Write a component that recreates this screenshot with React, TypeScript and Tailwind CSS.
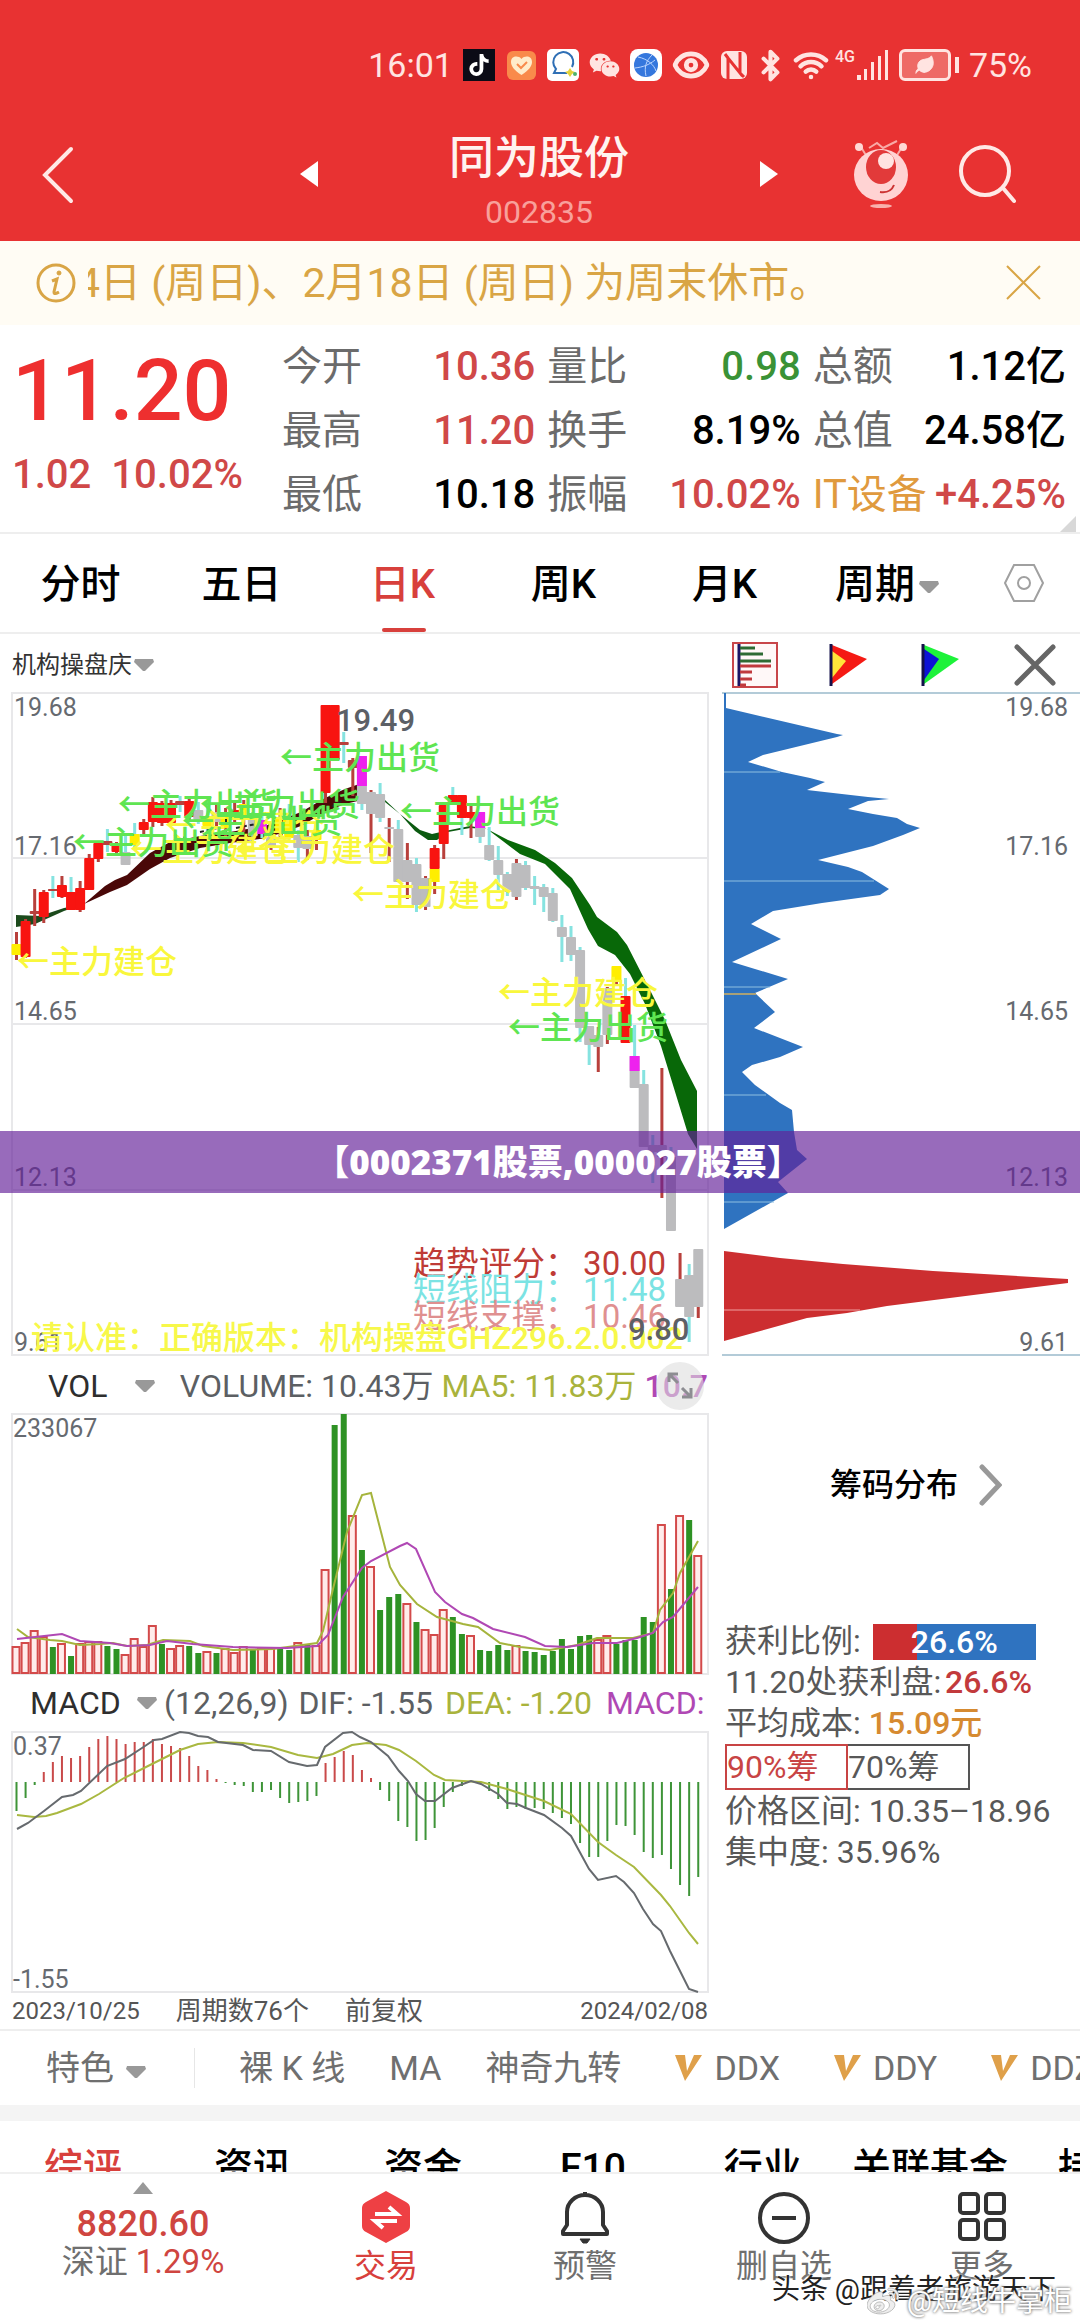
import React from "react";
import { FaTiktok, FaWeixin, FaWeibo } from "react-icons/fa6";
import { Bluetooth, Wifi, Leaf, Eye } from "lucide-react";

const STEP = 9.09;
const barX = (i: number) => 16.5 + i * STEP;

const RED = "#f81410";
const GRAY = "#bcbcbe";
const CYAN = "#86e3e0";
const WICK = "#b8403c";
const MAGENTA = "#ee22ee";
const YELLOW = "#ffee00";

// index, body top, body bottom, wick top, wick bottom, body colour, wick colour
type Candle = [number, number, number, number, number, string, string];
const candles: Candle[] = [
  [0, 252, 263, 240, 268, YELLOW, WICK],
  [1, 229, 265, 227, 266, RED, WICK],
  [2, 219, 222, 197, 234, WICK, WICK],
  [3, 200, 225, 198, 231, RED, WICK],
  [4, 197, 199, 184, 206, WICK, CYAN],
  [5, 193, 205, 184, 206, RED, WICK],
  [6, 200, 218, 185, 200, RED, CYAN],
  [7, 196, 218, 189, 220, RED, WICK],
  [8, 166, 198, 162, 198, RED, WICK],
  [9, 151, 167, 149, 170, RED, WICK],
  [10, 149, 153, 137, 160, WICK, CYAN],
  [11, 152, 160, 150, 162, RED, WICK],
  [12, 160, 173, 142, 173, GRAY, CYAN],
  [13, 142, 153, 131, 155, YELLOW, CYAN],
  [14, 130, 138, 127, 144, RED, WICK],
  [15, 110, 130, 105, 135, RED, WICK],
  [16, 111, 131, 109, 134, RED, WICK],
  [17, 111, 131, 108, 132, RED, WICK],
  [18, 109, 113, 104, 120, WICK, CYAN],
  [19, 109, 125, 107, 128, RED, WICK],
  [20, 118, 128, 110, 132, GRAY, CYAN],
  [21, 124, 134, 112, 140, YELLOW, CYAN],
  [22, 120, 130, 112, 134, GRAY, WICK],
  [23, 122, 136, 116, 144, YELLOW, WICK],
  [24, 118, 126, 110, 130, RED, WICK],
  [25, 112, 124, 108, 140, YELLOW, WICK],
  [26, 126, 144, 120, 150, GRAY, CYAN],
  [27, 128, 142, 122, 146, MAGENTA, CYAN],
  [28, 143, 155, 135, 158, GRAY, WICK],
  [29, 126, 140, 116, 146, YELLOW, WICK],
  [30, 128, 146, 112, 150, YELLOW, CYAN],
  [31, 143, 156, 138, 170, GRAY, CYAN],
  [32, 144, 157, 138, 168, GRAY, WICK],
  [33, 138, 148, 130, 158, YELLOW, WICK],
  [34, 13, 101, 13, 111, RED, WICK],
  [35, 13, 68, 13, 68, RED, WICK],
  [36, 50, 53, 40, 71, WICK, CYAN],
  [37, 68, 76, 66, 104, WICK, WICK],
  [38, 64, 112, 64, 118, GRAY, CYAN],
  [39, 100, 122, 98, 161, GRAY, WICK],
  [40, 102, 126, 91, 130, GRAY, CYAN],
  [41, 135, 137, 126, 170, GRAY, WICK],
  [42, 137, 190, 128, 190, GRAY, CYAN],
  [43, 168, 190, 151, 207, GRAY, WICK],
  [44, 172, 213, 166, 220, GRAY, CYAN],
  [45, 186, 215, 184, 218, GRAY, WICK],
  [46, 156, 177, 153, 202, RED, WICK],
  [47, 113, 152, 111, 167, RED, WICK],
  [48, 103, 113, 95, 113, RED, CYAN],
  [49, 103, 126, 103, 143, RED, CYAN],
  [50, 120, 126, 111, 146, RED, WICK],
  [51, 120, 145, 120, 151, GRAY, CYAN],
  [52, 153, 168, 135, 169, GRAY, CYAN],
  [53, 168, 183, 154, 198, GRAY, CYAN],
  [54, 182, 200, 180, 204, GRAY, CYAN],
  [55, 171, 205, 167, 208, GRAY, WICK],
  [56, 173, 196, 169, 198, GRAY, CYAN],
  [57, 194, 197, 184, 213, GRAY, CYAN],
  [58, 195, 205, 192, 220, GRAY, CYAN],
  [59, 201, 229, 196, 230, GRAY, CYAN],
  [60, 235, 245, 223, 270, GRAY, CYAN],
  [61, 245, 263, 234, 269, GRAY, CYAN],
  [62, 258, 336, 255, 350, GRAY, CYAN],
  [63, 334, 353, 334, 373, GRAY, CYAN],
  [64, 343, 355, 335, 380, GRAY, WICK],
  [65, 296, 343, 295, 352, GRAY, WICK],
  [66, 274, 290, 274, 294, YELLOW, WICK],
  [67, 304, 351, 286, 351, RED, CYAN],
  [68, 364, 396, 333, 396, GRAY, CYAN],
  [69, 392, 455, 378, 455, GRAY, CYAN],
  [70, 453, 460, 443, 491, GRAY, CYAN],
  [71, 453, 465, 376, 506, GRAY, WICK],
  [72, 465, 539, 455, 539, GRAY, CYAN],
  [73, 587, 615, 561, 615, GRAY, WICK],
  [74, 583, 625, 572, 650, GRAY, CYAN],
  [75, 557, 615, 557, 626, GRAY, WICK],
];

// blocks painted over a candle body: index, top, bottom, colour
const marks: [number, number, number, string][] = [
  [38, 64, 94, MAGENTA],
  [46, 177, 190, YELLOW],
  [51, 120, 136, MAGENTA],
  [68, 364, 379, MAGENTA],
];

const SELL = "←主力出货";
const BUY = "←主力建仓";
const signals: [number, number, string][] = [
  [17, 270, BUY],
  [130, 158, BUY],
  [165, 134, BUY],
  [235, 158, BUY],
  [352, 203, BUY],
  [498, 301, BUY],
  [280, 66, SELL],
  [118, 113, SELL],
  [200, 113, SELL],
  [182, 130, SELL],
  [73, 151, SELL],
  [400, 120, SELL],
  [508, 336, SELL],
];

const volumes = [
  26, 30, 42, 36, -27, 29, -18, 29, 31, 31, -28, -25, 18, 34, 26, 47, -30, 24, 27, -28, -21, 21, -21, 24, 20, 26,
  -24, 24, 24, -26, -24, 30, -30, 27, 103, -249, -260, 157, -124, 106, -64, -77, -80, 69, -52, 43, 38, 63, -57,
  -40, 37, -24, -23, -29, -24, 27, -23, -22, -19, -23, -35, -25, -38, -39, 33, 37, -30, -34, -34, -57, -52, 148,
  -85, 157, -154, 117,
];

const macd = [
  -29, -16, -3, 10, 20, 26, 24, 26, 35, 43, 46, 43, 38, 40, 40, 43, 38, 36, 34, 26, 16, 12, 3, -1, -3, -4, -10, -10,
  -8, -16, -21, -20, -19, -14, 19, 25, 31, 27, 12, 4, -8, -19, -39, -45, -59, -58, -46, -25, -10, -4, 0, -2, -9, -17,
  -27, -25, -27, -26, -27, -31, -36, -42, -61, -75, -75, -59, -43, -44, -53, -70, -76, -73, -87, -103, -114, -95,
];

const priceLabels: [string, number][] = [
  ["19.68", 24],
  ["17.16", 163],
  ["14.65", 328],
  ["12.13", 494],
  ["9.61", 659],
];

function Caret({ className = "" }: { className?: string }) {
  return (
    <svg className={`h-3 w-5 shrink-0 ${className}`} viewBox="0 0 20 12" fill="#999">
      <path d="M1 0h18l1 3-9 9h-2L0 3z" />
    </svg>
  );
}

function StatusBar() {
  return (
    <div className="flex h-8 items-center justify-end gap-[10px] pr-12 text-[34px] leading-8 text-[#ffe4e1]">
      <span>16:01</span>
      <span className="flex h-8 w-8 items-center justify-center bg-[#0b0b16] text-white">
        <FaTiktok size={22} />
      </span>
      <svg className="h-8 w-8" viewBox="0 0 32 32">
        <rect x="2" y="2" width="29" height="29" rx="6" fill="#f98a4b" />
        <path d="M16.500 26C9 21 6 17 6 13c0-6 7-7 10.500-3C20 6 27 7 27 13c0 4-3 8-10.500 13z" fill="#ffeccb" />
        <path d="M12 15l4 4 6-6" fill="none" stroke="#f98a4b" strokeWidth="2" />
      </svg>
      <svg className="h-8 w-8" viewBox="0 0 32 32">
        <rect width="32" height="32" rx="5" fill="#fff" />
        <path d="M20 24H7l2-4a10 10 0 1 1 16-2" fill="none" stroke="#2f6fb5" strokeWidth="2" />
        <path d="M23 19l2 3 3 1-3 2-2 3-2-3-3-2 3-1z" fill="#e4d23a" />
        <circle cx="28" cy="25" r="2" fill="#4fb26b" />
      </svg>
      <FaWeixin size={31} />
      <svg className="h-8 w-8" viewBox="0 0 32 32">
        <rect width="32" height="32" rx="8" fill="#fff" />
        <circle cx="16" cy="16" r="12" fill="#3577dd" />
        <path d="M8 8c10 2 16 8 18 14M22 6c-6 6-8 12-6 21M5 19c8-1 14-3 20-8" fill="none" stroke="#bcd6ff" strokeWidth="1" />
      </svg>
      <Eye size={38} strokeWidth={3} />
      <svg className="h-8 w-7" viewBox="0 0 28 32" fill="none">
        <rect x="1" y="2" width="26" height="28" rx="6" fill="#ffe4e1" />
        <path d="M8 30V9l12 15V3M8 9L5 5M20 24l4 4" stroke="#e83232" strokeWidth="3" />
      </svg>
      <Bluetooth className="-mx-1" size={33} strokeWidth={3} />
      <Wifi size={36} strokeWidth={3} />
      <span className="-ml-1 self-start text-[16px] leading-4 font-medium">4G</span>
      <svg className="-ml-2 h-8 w-8" viewBox="0 0 32 32" fill="#ffe4e1">
        <path d="M0 26h4v5H0zM7 20h3v11H7zM14 13h3v18h-3zM21 7h3v24h-3zM28 1h3v30h-3z" />
      </svg>
      <span className="flex items-center gap-1">
        <span className="flex h-8 w-13 items-center justify-center rounded-md border-3 border-[#ffe4e1] bg-[#ee6a66]">
          <Leaf size={22} fill="#ffe4e1" strokeWidth={1} />
        </span>
        <span className="h-4 w-1 bg-[#ffe4e1]" />
      </span>
      <span>75%</span>
    </div>
  );
}

function TitleBar() {
  return (
    <div className="flex items-center justify-between pt-8 pr-16 pl-10">
      <button type="button" aria-label="返回" className="w-[259px]">
        <svg className="h-[60px] w-9" viewBox="0 0 36 60" fill="none" stroke="#ffe9e6" strokeWidth="4" strokeLinecap="round">
          <path d="M31 5L5 31l26 26" />
        </svg>
      </button>
      <button type="button" aria-label="上一只">
        <svg className="h-7 w-5" viewBox="0 0 20 28" fill="#fff"><path d="M19 1v26L1 14z" /></svg>
      </button>
      <div className="flex flex-1 flex-col items-center pt-4">
        <h1 className="text-[45px] leading-[60px] font-medium text-[#fff3f0]">同为股份</h1>
        <span className="text-[32px] leading-[46px] text-[#f8a09b]">002835</span>
      </div>
      <button type="button" aria-label="下一只" className="mr-[73px]">
        <svg className="h-7 w-5" viewBox="0 0 20 28" fill="#fff"><path d="M1 1v26l18-13z" /></svg>
      </button>
      <div className="flex items-center gap-12">
        <button type="button" aria-label="助手">
          <svg className="h-[70px] w-[58px]" viewBox="0 0 58 70">
            <path d="M9 8l6 10M50 8l-6 10M17 9l8-5 6 5 14-7" fill="none" stroke="#f9aaa6" strokeWidth="2" />
            <circle cx="7" cy="8" r="4" fill="#ffd9d6" />
            <circle cx="51" cy="8" r="4" fill="#ffd9d6" />
            <ellipse cx="29" cy="36" rx="27" ry="26" fill="#ffd3d3" />
            <ellipse cx="29" cy="28" rx="15" ry="17" fill="#e23a3a" />
            <circle cx="34" cy="22" r="8" fill="#ffe4e1" />
            <path d="M28 53c7 1 12-2 14-7" fill="none" stroke="#c33" strokeWidth="2" />
            <ellipse cx="29" cy="67" rx="11" ry="2" fill="#f9b0ac" />
          </svg>
        </button>
        <button type="button" aria-label="搜索">
          <svg className="h-[60px] w-[58px]" viewBox="0 0 58 60" fill="none" stroke="#ffe9e6" strokeWidth="4" strokeLinecap="round">
            <circle cx="27" cy="27" r="24" />
            <path d="M45 44l11 13" />
          </svg>
        </button>
      </div>
    </div>
  );
}

function Notice() {
  return (
    <div className="flex h-[84px] items-center bg-[#fffcf4] pr-9 pl-9 text-[#d9a545]">
      <svg className="h-10 w-10 shrink-0" viewBox="0 0 40 40" fill="none" stroke="currentColor">
        <circle cx="20" cy="20" r="18" strokeWidth="3" />
        <circle cx="23" cy="10" r="2" fill="currentColor" />
        <path d="M16 18l5-2-3 13c0 3 3 1 5 0" strokeWidth="3" />
      </svg>
      <p className="ml-3 flex flex-1 justify-start overflow-hidden text-[41px] leading-[50px] whitespace-pre">
        <span className="flex w-3 shrink-0 justify-end overflow-hidden">4</span>
        <span>日 (周日)、2月18日 (周日) 为周末休市。</span>
      </p>
      <button type="button" aria-label="关闭">
        <svg className="h-10 w-10" viewBox="0 0 40 40" fill="none" stroke="currentColor" strokeWidth="2">
          <path d="M3 3l33 33M36 3L3 36" />
        </svg>
      </button>
    </div>
  );
}

const quoteColumns = [
  [
    ["今开", "10.36", "text-[#d04848]"],
    ["最高", "11.20", "text-[#d04848]"],
    ["最低", "10.18", "text-black"],
  ],
  [
    ["量比", "0.98", "text-[#3a9236]"],
    ["换手", "8.19%", "text-black"],
    ["振幅", "10.02%", "text-[#d04848]"],
  ],
  [
    ["总额", "1.12亿", "text-black"],
    ["总值", "24.58亿", "text-black"],
    ["IT设备", "+4.25%", "text-[#d04848]"],
  ],
];

function Quote() {
  return (
    <section className="relative flex h-[209px] border-b-2 border-[#eee] pr-[14px]">
      <div className="w-[282px] pt-5 pl-3">
        <div className="text-[86px] leading-[92px] font-medium text-[#ee2f2f]">11.20</div>
        <div className="mt-4 flex gap-5 text-[40px] leading-[44px] font-medium text-[#d04848]">
          <span>1.02</span>
          <span>10.02%</span>
        </div>
      </div>
      <div className="grid flex-1 grid-cols-3 gap-x-3 pt-[10px] text-[40px] leading-16">
        {quoteColumns.map((rows, c) => (
          <dl key={c}>
            {rows.map(([label, value, color]) => (
              <div key={label} className="flex justify-between whitespace-nowrap">
                <dt className={label === "IT设备" ? "text-[#e09a3e]" : "text-[#6b6b6b]"}>{label}</dt>
                <dd className={`font-medium ${color}`}>{value}</dd>
              </div>
            ))}
          </dl>
        ))}
      </div>
      <svg className="absolute right-1 bottom-0 h-4 w-4" viewBox="0 0 16 16" fill="#d8d8d8"><path d="M16 0v16H0z" /></svg>
    </section>
  );
}

function PeriodTabs() {
  const tabs = ["分时", "五日", "日K", "周K", "月K"];
  return (
    <nav className="flex h-[100px] items-stretch border-b-2 border-[#eee] pr-9 text-[40px]">
      {tabs.map((tab) => (
        <button
          key={tab}
          type="button"
          className={`relative w-[161px] pt-1 font-medium ${tab === "日K" ? "text-[#d8403c]" : "text-black"}`}
        >
          {tab}
          {tab === "日K" && <span className="absolute bottom-0 left-15 h-1 w-11 rounded bg-[#d8403c]" />}
        </button>
      ))}
      <button type="button" className="ml-[30px] flex items-center gap-1 pt-1 font-medium">
        周期
        <Caret className="mt-1" />
      </button>
      <button type="button" aria-label="设置" className="ml-auto">
        <svg className="h-10 w-10" viewBox="0 0 40 40" fill="none" stroke="#a0a0a0" strokeWidth="2">
          <path d="M10 2h20l9 18-9 18H10L1 20z" />
          <circle cx="20" cy="20" r="6" />
        </svg>
      </button>
    </nav>
  );
}

function KLineChart() {
  return (
    <svg className="block w-full" viewBox="0 0 720 664">
      <g stroke="#e8e8ea" strokeWidth="2" fill="none">
        <rect x="12" y="1" width="696" height="662" />
        <path d="M12 166h696M12 332h696M12 498h696" />
      </g>
      <g fill="#666a70" fontSize="25">
        {priceLabels.map(([label, y]) => (
          <text key={label} x="14" y={y}>{label}</text>
        ))}
      </g>

      {/* trend ribbon */}
      <path d="M16 223l24 1 24-8 20-4-20 7-29 13-19 3z" fill="#1c4a1c" />
      <path
        d="M84 212L105 194 115 188 127 183 150 161 170 150 200 144 230 140 265 134 301 120 325 106 345 97 362 91V108L345 112 325 120 301 134 267 146 230 151 200 156 170 166 150 177 127 193 110 200z"
        fill="#4a0808"
      />
      <path d="M362 99l23 9 15 14 20 16 12 4 13-3 25-5 17 3-17-1-22 4-11 8h-9l-13-9-15-17-15-12z" fill="#0b5a10" />
      <path
        d="M487 137l21 11 27 10 20 13 17 15 18 27 7 12 20 15 10 13 23 45 15 30 16 40 16 31v58l-9-15-27-88-16-42-15-30-15-19-17-9-10-17-18-40-25-25-25-10z"
        fill="#086808"
      />

      {candles.map(([i, top, bottom, high, low, fill, wick]) => (
        <g key={i}>
          <rect x={barX(i) - 1.5} y={high} width="3" height={low - high} fill={wick} />
          <rect x={barX(i) - 5} y={top} width="10" height={bottom - top} rx="1" fill={fill} />
        </g>
      ))}
      {marks.map(([i, top, bottom, fill]) => (
        <rect key={i} x={barX(i) - 5} y={top} width="10" height={bottom - top} fill={fill} />
      ))}
      <path d="M170 150l16-5M200 140l22-5M236 136l20-4M226 120v12M274 128v16M282 128v16M326 118l20-12" stroke="#222" strokeWidth="2" strokeDasharray="4 3" />

      <g fontSize="32" fontWeight="500">
        {signals.map(([x, y, text], n) => (
          <text key={n} x={x} y={y + 11} fill={text === SELL ? "#5fe552" : "#f9f73c"}>{text}</text>
        ))}
      </g>
      <text x="336" y="39" fontSize="31" fontWeight="500" fill="#5c6066">19.49</text>

      <g fontSize="33">
        <text x="413" y="583" fill="#bf3b36">趋势评分：</text>
        <text x="666" y="583" textAnchor="end" fill="#bf3b36">30.00</text>
        <text x="413" y="609" fill="#7be3e3">短线阻力：</text>
        <text x="666" y="609" textAnchor="end" fill="#7be3e3">11.48</text>
        <text x="413" y="636" fill="#df9090">短线支撑：</text>
        <text x="666" y="636" textAnchor="end" fill="#df9090">10.46</text>
      </g>
      <text x="31" y="657" fontSize="32" fontWeight="500" fill="#f7f84a">请认准：正确版本：机构操盘GHZ296.2.0.002</text>
      <text x="628" y="648" fontSize="31" fontWeight="500" fill="#5c6066">9.80</text>
    </svg>
  );
}

function VolumeChart() {
  return (
    <svg className="block w-full" viewBox="0 0 720 262">
      <rect x="12" y="1" width="696" height="260" fill="none" stroke="#e8e8ea" strokeWidth="2" />
      <text x="13" y="24" fontSize="25" fill="#666a70">233067</text>
      {volumes.map((v, i) =>
        v > 0 ? (
          <rect key={i} x={barX(i) - 4} y={260 - v} width="7" height={v} fill="#ffeceb" stroke="#d34a4a" strokeWidth="2" />
        ) : (
          <rect key={i} x={barX(i) - 3} y={261 + v} width="6" height={-v} fill="#2e9224" />
        ),
      )}
      <polyline
        points="17,216 28,224 50,227 62,228 80,232 100,231 113,230 127,233 147,232 163,227 190,228 203,233 233,237 273,236 317,230 323,218 333,176 347,119 362,82 371,80 390,154 400,172 417,191 437,204 463,211 478,214 500,230 520,234 550,237 577,232 597,225 633,225 653,220 660,197 673,180 680,160 698,128"
        fill="none"
        stroke="#a5b43c"
        strokeWidth="2"
      />
      <polyline
        points="17,226 62,221 80,228 110,230 127,233 150,232 167,228 193,231 233,234 287,235 317,233 328,222 343,184 362,155 371,148 400,133 407,130 416,136 435,179 445,189 462,201 473,205 493,216 525,224 545,233 567,234 593,230 617,230 637,225 653,220 663,209 673,204 698,174"
        fill="none"
        stroke="#b048b4"
        strokeWidth="2"
      />
    </svg>
  );
}

function MacdChart() {
  return (
    <svg className="block w-full" viewBox="0 0 720 264">
      <rect x="12" y="3" width="696" height="260" fill="none" stroke="#e8e8ea" strokeWidth="2" />
      <g fontSize="25" fill="#666a70">
        <text x="13" y="26">0.37</text>
        <text x="13" y="259">-1.55</text>
      </g>
      {macd.map((v, i) => (
        <rect
          key={i}
          x={barX(i) - 1}
          y={v > 0 ? 53 - v : 53}
          width="2"
          height={Math.abs(v)}
          fill={v > 0 ? "#c94a4a" : "#3e9438"}
        />
      ))}
      <polyline
        points="17,86 34,88 46,87 57,84 81,75 99,65 124,49 152,35 180,21 198,15 218,13 243,14 271,18 298,26 317,29 333,25 352,16 367,14 386,16 399,21 416,32 434,46 445,51 481,53 507,60 544,72 571,85 598,113 616,126 634,138 661,166 670,177 689,204 698,215"
        fill="none"
        stroke="#a9b840"
        strokeWidth="2"
      />
      <polyline
        points="17,100 28,94 44,82 62,68 73,66 81,62 107,37 125,30 142,19 154,11 162,10 180,3 189,4 198,7 208,8 218,13 243,16 253,21 271,22 289,33 307,37 317,36 325,18 343,4 352,3 360,8 371,13 388,27 399,42 408,52 416,65 425,72 435,72 452,59 471,52 481,55 498,65 507,74 517,75 526,79 544,86 562,99 571,107 589,140 598,151 616,147 624,153 634,164 643,180 653,195 661,202 670,222 689,260 698,263"
        fill="none"
        stroke="#666a6e"
        strokeWidth="2"
      />
    </svg>
  );
}

function ChipChart() {
  return (
    <svg className="block w-full" viewBox="0 0 360 664">
      <path d="M2 1h358M2 663h358" stroke="#b3cbd8" strokeWidth="2" />
      <polygon
        points="4,1 6,1 6,16 117,42 123,43 117,45 43,63 28,70 62,80 90,86 105,90 87,98 148,105 169,107 148,109 128,117 153,122 177,126 187,132 200,136 183,143 153,154 98,168 128,175 142,180 169,197 160,203 102,211 53,219 31,232 61,247 12,270 68,287 35,301 55,320 34,336 83,355 60,365 32,373 22,380 35,393 60,411 72,418 74,440 77,458 87,467 58,490 68,501 4,537"
        fill="#2f73c0"
      />
      <polygon
        points="4,559 60,566 123,572 213,579 348,587 348,591 277,600 167,614 127,621 87,626 4,649"
        fill="#cc2e30"
      />
      <path d="M4 80h56M4 189h150M4 295h46M4 403h42M4 510h50" stroke="#8fc0e0" strokeWidth="1" />
      <path d="M4 618h136" stroke="#f0a0a0" strokeWidth="1" />
      <path d="M4 302h32" stroke="#a8a078" strokeWidth="2" />
      <g fill="#666a70" fontSize="25" textAnchor="end">
        {priceLabels.map(([label, y]) => (
          <text key={label} x="348" y={y}>{label}</text>
        ))}
      </g>
    </svg>
  );
}

function ChipTools() {
  return (
    <div className="flex h-[58px] items-center justify-between pt-1 pr-6 pl-3">
      <button type="button" aria-label="筹码">
        <svg className="block h-[46px] w-[46px]" viewBox="0 0 46 46" fill="none" strokeWidth="3">
          <rect x="1" y="1" width="44" height="44" stroke="#c8464a" strokeWidth="2" fill="#fff8f8" />
          <path d="M7 2v42" stroke="#1b1464" />
          <path d="M8 6h15M8 12h23M8 19h31" stroke="#2e6b34" />
          <path d="M8 24h31M8 30h12M8 37h12M8 43h6" stroke="#c03a3e" />
        </svg>
      </button>
      <button type="button" aria-label="红色信号">
        <svg className="block h-[42px] w-[42px]" viewBox="0 0 42 42">
          <path d="M3 1l35 14L3 40z" fill="#f51a14" />
          <path d="M3 7l14 10L3 34z" fill="#ffe53a" />
          <path d="M2 0v42" stroke="#14104a" strokeWidth="3" />
        </svg>
      </button>
      <button type="button" aria-label="绿色信号">
        <svg className="block h-[42px] w-[42px]" viewBox="0 0 42 42">
          <path d="M3 1l35 14L3 40z" fill="#1df23a" />
          <path d="M3 5l15 10L3 36z" fill="#0d12d6" />
          <path d="M2 0v42" stroke="#14104a" strokeWidth="3" />
        </svg>
      </button>
      <button type="button" aria-label="关闭筹码">
        <svg className="block h-[42px] w-[42px]" viewBox="0 0 42 42" stroke="#666" strokeWidth="5" strokeLinecap="round">
          <path d="M3 3l36 36M39 3L3 39" />
        </svg>
      </button>
    </div>
  );
}

function ChipInfo() {
  return (
    <div className="pl-[5px] text-[32px] leading-[41px] whitespace-nowrap text-[#585858]">
      <a href="#chips" className="flex items-center gap-5 pt-[108px] pl-[105px] font-medium text-black">
        筹码分布
        <svg className="h-[42px] w-6" viewBox="0 0 24 42" fill="none" stroke="#999" strokeWidth="5" strokeLinecap="round">
          <path d="M4 3l17 18L4 39" />
        </svg>
      </a>
      <div className="mt-[115px] flex items-center gap-3">
        获利比例:
        <span className="h-9 w-[163px] bg-linear-to-r from-[#cc2e30] from-27% to-[#2f73c0] to-27% text-center leading-9 font-medium text-white">
          26.6%
        </span>
      </div>
      <div>11.20处获利盘: <b className="-ml-1 font-medium text-[#c23a3c]">26.6%</b></div>
      <div>平均成本: <b className="font-medium text-[#d68a30]">15.09元</b></div>
      <div className="flex">
        <button type="button" className="h-[46px] w-[123px] border-2 border-[#c84444] text-left text-[#c84444]">90%筹</button>
        <button type="button" className="h-[46px] w-[122px] border-2 border-l-0 border-[#555] text-left">70%筹</button>
      </div>
      <div className="pt-px">价格区间: 10.35–18.96</div>
      <div>集中度: 35.96%</div>
    </div>
  );
}

function Charts() {
  return (
    <section className="relative grid grid-cols-[2fr_1fr]">
      <div className="min-w-0">
        <button type="button" className="flex h-[58px] items-center pt-1 pl-3 text-2xl text-[#333]">
          机构操盘庆
          <Caret className="ml-[2px]" />
        </button>
        <KLineChart />
        <div className="relative flex h-[57px] items-center overflow-hidden pt-[2px] pr-3 pl-12 text-[32px] whitespace-nowrap text-[#5c5f63]">
          <button type="button" className="flex w-[134px] items-center gap-7 text-[#2e2e2e]">
            VOL
            <Caret />
          </button>
          <span>VOLUME: 10.43万</span>
          <span className="ml-2 text-[#a9b33c]">MA5: 11.83万</span>
          <span className="ml-2 font-medium text-[#b048b4]">10.7</span>
          <button type="button" aria-label="展开" className="absolute right-4 h-12 w-12 rounded-full bg-[#dddddd99]">
            <svg className="h-12 w-12" viewBox="0 0 48 48" fill="none" stroke="#8d8d92" strokeWidth="3">
              <path d="M13 20v-8h9M13 12l9 9M35 26v9h-9M35 35l-9-9" />
            </svg>
          </button>
        </div>
        <VolumeChart />
        <div className="flex h-[54px] items-center pt-[2px] pl-[30px]">
          <div className="flex w-[678px] items-center overflow-hidden text-[32px] whitespace-nowrap text-[#5c5f63]">
            <button type="button" className="flex w-[134px] shrink-0 items-center gap-4 text-[#2e2e2e]">
              MACD
              <Caret />
            </button>
            <span>(12,26,9)</span>
            <span className="ml-[10px]">DIF: -1.55</span>
            <span className="ml-3 text-[#a9b33c]">DEA: -1.20</span>
            <span className="ml-[14px] text-[#b048b4]">MACD:</span>
          </div>
        </div>
        <MacdChart />
        <div className="flex h-[36px] items-center gap-9 pr-3 pl-3 text-[26px] leading-8 text-[#555]">
          <span className="text-2xl">2023/10/25</span>
          <span>周期数76个</span>
          <span>前复权</span>
          <span className="ml-auto text-2xl">2024/02/08</span>
        </div>
      </div>
      <div className="min-w-0">
        <ChipTools />
        <ChipChart />
        <ChipInfo />
      </div>
      <div className="absolute inset-x-0 top-[497px] flex h-[62px] items-center justify-center bg-[#642099a9] pl-9 font-['Open_Sans','Noto_Sans_CJK_SC',sans-serif] text-[35px] font-extrabold text-white">
        【0002371股票,000027股票】
      </div>
    </section>
  );
}

function Vip({ children }: { children: React.ReactNode }) {
  return (
    <button type="button" className="flex items-center gap-3">
      <svg className="h-7 w-7" viewBox="0 0 28 28" fill="#dfa04a">
        <path d="M1 1h10l2 16L20 1h8L11 27z" />
      </svg>
      {children}
    </button>
  );
}

function IndicatorBar() {
  return (
    <div className="flex h-[76px] items-center overflow-hidden border-t-2 border-[#eee] pl-[46px] text-[34px] whitespace-nowrap text-[#6f6f6f]">
      <button type="button" className="flex items-center gap-3">
        特色
        <Caret className="mt-2" />
      </button>
      <span className="mr-11 ml-12 h-10 w-px shrink-0 bg-[#e6e6e6]" />
      <div className="flex items-center gap-11">
        <button type="button">裸 K 线</button>
        <button type="button">MA</button>
        <button type="button">神奇九转</button>
      </div>
      <div className="ml-[53px] flex items-center gap-[53px]">
        <Vip>DDX</Vip>
        <Vip>DDY</Vip>
        <Vip>DDZ</Vip>
      </div>
    </div>
  );
}

function InfoTabs() {
  const tabs = [
    ["综评", "text-[#d8403c]"],
    ["资讯", ""],
    ["资金", ""],
    ["F10", "px-[6px]"],
    ["行业", ""],
    ["关联基金", "-mx-[42px]"],
    ["持仓", ""],
  ];
  return (
    <nav className="flex h-[51px] items-start gap-[92px] overflow-hidden pt-6 pl-11 text-[39px] leading-[46px] font-medium whitespace-nowrap text-black">
      {tabs.map(([tab, extra]) => (
        <a key={tab} href={`#${tab}`} className={extra}>
          {tab}
        </a>
      ))}
    </nav>
  );
}

function BottomBar() {
  return (
    <footer className="relative flex h-[152px] border-t-2 border-[#f0f0f0] text-[32px] leading-9 text-[#6f6f6f]">
      <button type="button" className="flex w-[286px] flex-col items-center pt-2">
        <svg className="h-3 w-5" viewBox="0 0 20 12" fill="#999"><path d="M10 0l10 12H0z" /></svg>
        <span className="mt-[10px] text-[36px] leading-10 font-medium text-[#cf4540]">8820.60</span>
        <span className="text-[33px]">深证 <span className="text-[#cf4540]">1.29%</span></span>
      </button>
      <button type="button" className="flex w-[200px] flex-col items-center gap-1 pt-4 text-[#d8403c]">
        <svg className="h-[54px] w-[50px]" viewBox="0 0 50 54">
          <path d="M25 1l20 11q4 2 4 6v18q0 4-4 6L25 53 5 42q-4-2-4-6V18q0-4 4-6z" fill="#ee4044" />
          <path d="M14 24h22l-8-7M36 31H14l8 7" fill="none" stroke="#fff" strokeWidth="4" />
        </svg>
        交易
      </button>
      <button type="button" className="flex w-[198px] flex-col items-center gap-1 pt-4">
        <svg className="h-[54px] w-[50px]" viewBox="0 0 50 54" fill="none" stroke="#333" strokeWidth="4" strokeLinejoin="round">
          <path d="M25 2v4M7 35V22a18 17 0 0 1 36 0v13l4 6v3H3v-3z" />
          <path d="M20 49h10l-3 4h-4z" fill="#333" strokeWidth="1" />
        </svg>
        预警
      </button>
      <button type="button" className="flex w-[200px] flex-col items-center gap-1 pt-4">
        <svg className="h-[54px] w-[54px]" viewBox="0 0 54 54" fill="none" stroke="#333" strokeWidth="4">
          <circle cx="27" cy="28" r="24" />
          <path d="M15 28h24" />
        </svg>
        删自选
      </button>
      <button type="button" className="flex w-[196px] flex-col items-center gap-1 pt-4">
        <svg className="h-[54px] w-[50px]" viewBox="0 0 50 54" fill="none" stroke="#333" strokeWidth="4">
          <rect x="3" y="4" width="18" height="19" rx="3" />
          <rect x="29" y="4" width="18" height="19" rx="3" />
          <rect x="3" y="30" width="18" height="19" rx="3" />
          <rect x="29" y="30" width="18" height="19" rx="3" />
        </svg>
        更多
      </button>
      <span className="absolute right-6 bottom-4 text-[28px] whitespace-nowrap text-[#222] [text-shadow:0_0_3px_#fff,0_0_3px_#fff]">
        头条 @跟着老旅游天下
      </span>
      <span className="absolute right-2 bottom-1 flex items-center gap-2 text-[28px] whitespace-nowrap text-white [text-shadow:0_0_3px_#777,0_0_3px_#999]">
        <FaWeibo size={32} color="#eee" stroke="#aaa" strokeWidth={12} />
        @短线牛掌柜
      </span>
    </footer>
  );
}

export default function App() {
  return (
    <main className="overflow-hidden bg-white font-['Roboto','Noto_Sans_CJK_SC',sans-serif]">
      <header className="h-[241px] bg-[#e83232] pt-[49px]">
        <StatusBar />
        <TitleBar />
      </header>
      <Notice />
      <Quote />
      <PeriodTabs />
      <Charts />
      <IndicatorBar />
      <div className="h-4 bg-[#f4f4f4]" />
      <InfoTabs />
      <BottomBar />
    </main>
  );
}
